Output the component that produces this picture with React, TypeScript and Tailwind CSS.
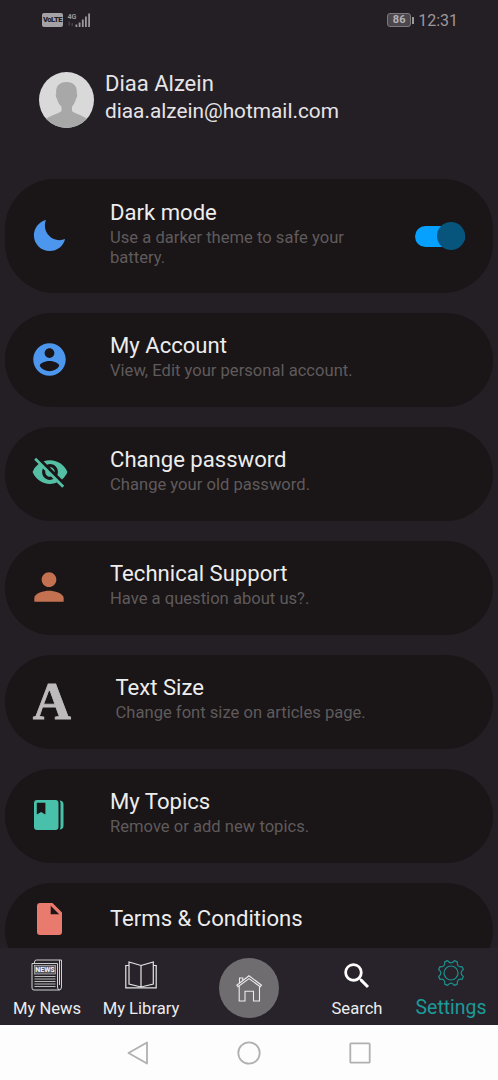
import { useState } from 'react';
import type { ReactNode } from 'react';
import { IoMdMoon } from 'react-icons/io';
import { MdPerson, MdSearch, MdVisibilityOff } from 'react-icons/md';

interface SettingItem {
  id: string;
  title: string;
  subtitle?: string;
  icon: ReactNode;
}

const AccountIcon = () => (
  <svg width="39" height="39" viewBox="0 0 24 24" className="text-[#4c97ed]" fill="currentColor">
    <path d="M12 2C6.480 2 2 6.480 2 12s4.480 10 10 10 10-4.480 10-10S17.520 2 12 2zm0 3c1.660 0 3 1.340 3 3s-1.340 3-3 3-3-1.340-3-3 1.340-3 3-3zm0 14.200c-2.500 0-4.710-1.280-6-3.220.030-1.990 4-3.080 6-3.080 1.990 0 5.970 1.090 6 3.080-1.290 1.940-3.500 3.220-6 3.220z" />
  </svg>
);

const TopicsIcon = () => (
  <svg width="30" height="30" viewBox="0 0 30 30" className="text-[#48c0aa]" fill="currentColor">
    <path
      fillRule="evenodd"
      d="M3 0H21.500a3 3 0 0 1 3 3V27a3 3 0 0 1-3 3H3a3 3 0 0 1-3-3V3a3 3 0 0 1 3-3ZM2.800 2.700V14.500L7.100 12L11.400 14.500V2.700Z"
    />
    <path d="M25.500 0.400a4 4 0 0 1 4 4V25.600a4 4 0 0 1-4 4q1-1 1-3V3.400q0-2-1-3Z" />
  </svg>
);

const FileIcon = () => (
  <svg width="25" height="32" viewBox="0 0 25 32" className="text-[#e97a6e]" fill="currentColor">
    <path
      fillRule="evenodd"
      d="M3 0H15.500L25 9.500V29a3 3 0 0 1-3 3H3a3 3 0 0 1-3-3V3a3 3 0 0 1 3-3ZM13.700 2.800V11.200H22.200Z"
    />
  </svg>
);

const NewsIcon = () => (
  <svg width="32" height="32" viewBox="0 0 32 32" fill="none" stroke="#cfcfcf" strokeWidth="1">
    <path d="M3.500 4.500V3q0-2 2-2H30.500V28q0 3-2.500 3H3q-2 0-2-2V4.500H26.500V28q0 3 2 3M28.500 1V26" />
    <rect x="3.500" y="6.500" width="21" height="8.500" fill="#59565c" strokeWidth="0.600" />
    <text
      x="14"
      y="13.400"
      textAnchor="middle"
      fontSize="7"
      fontWeight="700"
      fill="#f2f2f2"
      stroke="none"
      fontFamily="Roboto, sans-serif"
    >
      NEWS
    </text>
    <path d="M3.500 17.500H24.500M3.500 20H24.500M3.500 22.500H24.500M3.500 25H24.500M3.500 27.500H24.500" stroke="#b8b8b8" />
  </svg>
);

const LibraryIcon = () => (
  <svg width="32" height="28" viewBox="0 0 32 28" fill="none" stroke="#e4e4e4" strokeWidth="1.200">
    <path d="M16 4.500L28.300 1V23L16 26L4 23V1ZM16 4.500V26" />
    <path d="M4 4.500H0.800V26.800H31.200V4.500H28.300" />
  </svg>
);

const HomeIcon = () => (
  <svg width="28" height="28" viewBox="0 0 28 28" fill="none" stroke="#ebebeb" strokeWidth="1.100">
    <path d="M1.800 11.200L14 1.800L26.500 11.200L25.300 12.800L14 4.600L3 12.800Z" />
    <path d="M4.200 12V27H10V17.300H18.500V27H24.500V12M4.500 9V4H7.800V6.500" />
  </svg>
);

// point on a circle around the middle of the gear
const polar = (radius: number, deg: number) => {
  const rad = (deg * Math.PI) / 180;
  return `${(14 + radius * Math.cos(rad)).toFixed(2)} ${(14 + radius * Math.sin(rad)).toFixed(2)}`;
};

const gearPath = [0, 1, 2, 3, 4, 5, 6, 7]
  .map((k) => {
    const a = 22.5 + 45 * k;
    return `${k === 0 ? 'M' : 'L'}${polar(12.8, a - 7)}L${polar(12.8, a + 7)}Q${polar(7.8, a + 22.5)} ${polar(12.8, a + 38)}`;
  })
  .join('');

const GearIcon = () => (
  <svg width="28" height="28" viewBox="0 0 28 28" fill="none" stroke="#1b9290" strokeWidth="1.200">
    <path d={`${gearPath}Z`} strokeLinejoin="round" />
    <circle cx="14" cy="14" r="7" />
  </svg>
);

const items: SettingItem[] = [
  {
    id: 'dark',
    title: 'Dark mode',
    subtitle: 'Use a darker theme to safe your battery.',
    icon: <IoMdMoon size={39} className="text-[#4c97ed]" />,
  },
  {
    id: 'account',
    title: 'My Account',
    subtitle: 'View, Edit your personal account.',
    icon: <AccountIcon />,
  },
  {
    id: 'password',
    title: 'Change password',
    subtitle: 'Change your old password.',
    icon: <MdVisibilityOff size={38} className="mb-[2px] ml-px text-[#55bfa6]" />,
  },
  {
    id: 'support',
    title: 'Technical Support',
    subtitle: 'Have a question about us?.',
    icon: <MdPerson size={44} className="text-[#c47151]" />,
  },
  {
    id: 'text-size',
    title: 'Text Size',
    subtitle: 'Change font size on articles page.',
    icon: (
      <span className="pl-[6px] font-['Liberation_Serif',serif] text-[53px] font-bold leading-[54px] text-[#bdbbbc] [-webkit-text-stroke:0.8px_#bdbbbc]">
        A
      </span>
    ),
  },
  {
    id: 'topics',
    title: 'My Topics',
    subtitle: 'Remove or add new topics.',
    icon: <TopicsIcon />,
  },
  {
    id: 'terms',
    title: 'Terms & Conditions',
    icon: <FileIcon />,
  },
];

const StatusBar = () => (
  <div className="flex h-10 shrink-0 items-center justify-between pl-[42px] pr-[40px] text-[#9b989c]">
    <div className="flex items-center gap-1">
      <span className="flex h-[14px] w-[21px] items-center justify-center rounded-[2px] bg-[#a5a2a6] text-[7.5px] font-black tracking-[-0.4px] text-[#241e25]">
        VoLTE
      </span>
      <svg width="24" height="16" viewBox="0 0 24 16" fill="currentColor">
        <text x="0.500" y="7" fontSize="8" fontWeight="700" fontFamily="Roboto, sans-serif" textLength="9" lengthAdjust="spacingAndGlyphs">4G</text>
        <path d="M8.500 12.500h1.800V15h-1.800zM11.700 10.500h1.800V15h-1.800zM14.900 7.500h1.800V15h-1.800zM18 4.500h1.800V15h-1.800zM21.200 1.500H23V15h-1.800z" />
        <path d="M1.500 9.500H3v4H1.500zM4.500 11H6v3H4.500z" opacity="0.300" />
      </svg>
    </div>
    <div className="flex items-center">
      <span className="flex h-[14px] w-6 items-center justify-center rounded-[3px] border border-[#7b787c] bg-[#4b474c] text-[11px] font-bold text-[#b5b2b6]">
        86
      </span>
      <span className="ml-px h-[7px] w-[2px] bg-[#9b989c]" />
      <span className="ml-1 pt-px text-[16px]">12:31</span>
    </div>
  </div>
);

const Profile = () => (
  <div className="flex h-[139px] shrink-0 items-start gap-[11px] pl-[39px] pt-[29px]">
    <svg width="55" height="56" viewBox="0 0 55 56" className="mt-[3px]">
      <defs>
        <clipPath id="avatar">
          <ellipse cx="27.500" cy="28" rx="27.500" ry="28" />
        </clipPath>
      </defs>
      <g clipPath="url(#avatar)">
        <rect width="55" height="56" fill="#d9d9d9" />
        <path
          d="M27.500 10C34.500 10 38.500 14 37.800 21.500C38.500 22 38.400 25 37 27C36 30.500 34.500 33 33 34.500V39C35.500 42 46 43.500 50 49V56H5V49C9 43.500 20 42 22.500 39V34.500C20.500 33 19 30.500 18 27C16.600 25 16.500 22 17.200 21.500C16.500 14 20.500 10 27.500 10Z"
          fill="#a8a8a8"
        />
      </g>
    </svg>
    <div className="text-[#e6e4e6]">
      <p className="pt-px text-[22px] leading-[27px]">Diaa Alzein</p>
      <p className="text-[20.8px] leading-7">diaa.alzein@hotmail.com</p>
    </div>
  </div>
);

interface SettingCardProps {
  item: SettingItem;
  darkMode: boolean;
  onToggle: () => void;
}

const SettingCard = ({ item, darkMode, onToggle }: SettingCardProps) => {
  const isDark = item.id === 'dark';

  return (
    <div
      className={`flex shrink-0 items-center rounded-[50px] bg-[#1a1516] pl-[22px] pr-[28px] ${
        isDark ? 'h-[114px]' : 'h-[94px]'
      } ${item.subtitle ? '' : 'pb-[22px]'}`}
    >
      <div className={`flex w-11 shrink-0 items-center justify-center ${item.subtitle ? 'pb-[2px]' : ''}`}>
        {item.icon}
      </div>
      <div
        className={`flex-1 ${item.id === 'text-size' ? 'ml-[44.5px]' : 'ml-[39px]'} ${
          isDark ? 'pb-[6px]' : item.subtitle ? 'pb-2' : 'pb-[2px]'
        }`}
      >
        <h2 className="text-[22.1px] leading-[26px] text-[#ededed]">{item.title}</h2>
        {item.subtitle && (
          <p className="mt-[3px] max-w-[262px] text-[16.6px] leading-[19.5px] text-[#5f5b5c]">
            {item.subtitle}
          </p>
        )}
      </div>
      {isDark && (
        <button
          role="switch"
          aria-checked={darkMode}
          aria-label="Dark mode"
          onClick={onToggle}
          className={`flex h-[21px] w-[50px] items-center rounded-full bg-[#06a0ff] ${
            darkMode ? 'justify-end' : 'justify-start'
          }`}
        >
          <span className="size-[28px] shrink-0 rounded-full bg-[#07547d]" />
        </button>
      )}
    </div>
  );
};

const BottomNav = () => (
  <nav className="grid h-[77px] shrink-0 grid-cols-[94px_94px_122px_94px_94px] bg-[#28232a] text-[16.6px] leading-[22px] text-[#ededed]">
    <a className="flex flex-col items-center gap-[7px] pt-[11px]">
      <NewsIcon />
      <span>My News</span>
    </a>
    <a className="flex flex-col items-center gap-[9px] pt-[13px]">
      <LibraryIcon />
      <span>My Library</span>
    </a>
    <a className="flex items-start justify-center pt-[10px]">
      <span className="flex size-[60px] items-center justify-center rounded-full bg-[#6f6d70]">
        <HomeIcon />
      </span>
    </a>
    <a className="flex flex-col items-center gap-[5px] pt-[11px]">
      <MdSearch size={34} className="text-white" />
      <span>Search</span>
    </a>
    <a className="flex flex-col items-center gap-[10px] pt-[11px] text-[19.4px] text-[#1b9b99]">
      <GearIcon />
      <span>Settings</span>
    </a>
  </nav>
);

const SystemNav = () => (
  <div className="flex h-[55px] shrink-0 items-center justify-center gap-[88px] bg-[#fdfdfd]">
    <svg width="22" height="24" viewBox="0 0 22 24" fill="none" stroke="#b0b0b0" strokeWidth="1.800">
      <path d="M20 1.500V22.500L1.500 12Z" strokeLinejoin="round" />
    </svg>
    <svg width="24" height="24" viewBox="0 0 24 24" fill="none" stroke="#b0b0b0" strokeWidth="1.800">
      <circle cx="12" cy="12" r="10.700" />
    </svg>
    <svg width="22" height="24" viewBox="0 0 22 24" fill="none" stroke="#b0b0b0" strokeWidth="1.800">
      <rect x="1.300" y="2.300" width="19.400" height="19.400" rx="0.800" />
    </svg>
  </div>
);

const App = () => {
  const [darkMode, setDarkMode] = useState(true);

  return (
    <div className="flex h-[1080px] w-[498px] flex-col overflow-hidden bg-[#241e25] font-[Roboto,sans-serif]">
      <StatusBar />
      <Profile />
      <main className="flex min-h-0 flex-1 flex-col gap-5 overflow-hidden px-[5px]">
        {items.map((item) => (
          <SettingCard
            key={item.id}
            item={item}
            darkMode={darkMode}
            onToggle={() => setDarkMode(!darkMode)}
          />
        ))}
      </main>
      <BottomNav />
      <SystemNav />
    </div>
  );
};

export default App;
